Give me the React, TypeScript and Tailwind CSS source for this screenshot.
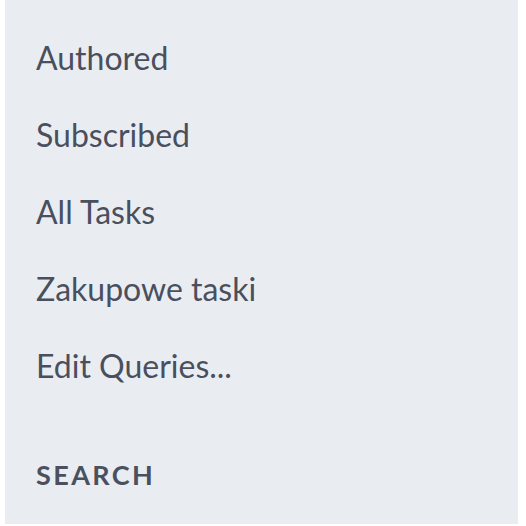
export default function App() {
  const items = ["Authored", "Subscribed", "All Tasks", "Zakupowe taski", "Edit Queries..."];

  return (
    <div className="w-[526px] h-[526px] bg-white pl-[5px] pr-[8px] pb-[2px]">
      <div className="h-full bg-[#e9edf2] pt-[19px] font-['Lato',sans-serif]">
        <ul>
          {items.map((item) => (
            <li
              key={item}
              className="pl-[31px] text-[32px] leading-[77px] text-[#4a4f5e]"
            >
              {item}
            </li>
          ))}
        </ul>
        <div className="pl-[31px] mt-[53px] text-[27px] leading-[36px] font-bold tracking-[2.4px] text-[#4b505e]">
          SEARCH
        </div>
      </div>
    </div>
  );
}
